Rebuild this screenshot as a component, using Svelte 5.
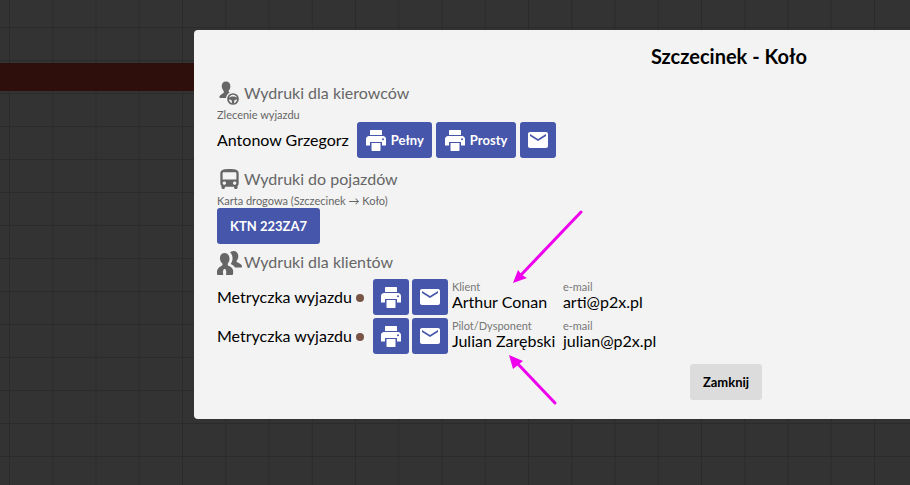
<script>
  const clients = [
    { role: 'Klient', name: 'Arthur Conan', email: 'arti@p2x.pl' },
    { role: 'Pilot/Dysponent', name: 'Julian Zarębski', email: 'julian@p2x.pl' }
  ];
</script>

{#snippet printer()}
  <svg class="ico" viewBox="0 0 24 24">
    <path d="M7 2h10c.6 0 1 .4 1 1v4H6V3c0-.6.4-1 1-1z"/>
    <path fill-rule="evenodd" d="M5 8h14c1.660 0 3 1.340 3 3v6.500h-4V14H6v3.500H2V11c0-1.660 1.340-3 3-3zm14 2.200a1 1 0 1 0 0 2 1 1 0 0 0 0-2z"/>
    <path d="M7.500 15h9v7c0 .6-.4 1-1 1h-7c-.6 0-1-.4-1-1z"/>
  </svg>
{/snippet}
{#snippet mail()}
  <svg class="ico" viewBox="0 0 24 24"><path d="M20 4H4c-1.100 0-2 .9-2 2v12c0 1.100.9 2 2 2h16c1.100 0 2-.9 2-2V6c0-1.100-.9-2-2-2zm0 4l-8 5-8-5V6l8 5 8-5v2z"/></svg>
{/snippet}

<div class="page">
  <div class="band"></div>
  <div class="modal">
    <h2>Szczecinek - Koło</h2>

    <div class="head">
      <svg class="head-ico" viewBox="0 0 25 25">
        <path d="M9 1.500c2.600 0 4.400 2 4.400 4.800 0 1.800-.7 3.300-1.700 4.200-.3 1 .2 1.500 1 2-2 1-3.400 3-3.700 5.500H3.500c-1 0-1.500-.8-1-1.700.8-1.400 2-2 3.300-2.800 1-.6 1.300-1.200 1-2C5.700 9.500 4.700 8 4.700 6.300 4.700 3.500 6.400 1.500 9 1.500z"/>
        <circle class="ring" cx="16" cy="19" r="5"/>
        <path d="M11 18.200c1.500-1.200 3-1.800 5-1.800s3.500.6 5 1.800v1l-3.500.8-.7 3.800h-1.600l-.7-3.800-3.500-.8z"/>
      </svg>
      <span>Wydruki dla kierowców</span>
    </div>
    <div class="small">Zlecenie wyjazdu</div>
    <div class="row driver">
      <span class="name">Antonow Grzegorz</span>
      <button class="btn wide full">{@render printer()}Pełny</button>
      <button class="btn wide plain">{@render printer()}Prosty</button>
      <button class="btn square">{@render mail()}</button>
    </div>

    <div class="head bus">
      <svg class="head-ico" viewBox="0 0 24 24"><path transform="translate(-1.200 0) scale(1.100 1)" d="M4 16c0 .88.39 1.670 1 2.220V20c0 .55.45 1 1 1h1c.55 0 1-.45 1-1v-1h8v1c0 .55.45 1 1 1h1c.55 0 1-.45 1-1v-1.780c.61-.55 1-1.340 1-2.220V6c0-3.500-3.580-4-8-4s-8 .5-8 4v10zm3.500 1c-.83 0-1.500-.67-1.500-1.500S6.670 14 7.500 14s1.500.67 1.500 1.500S8.330 17 7.500 17zm9 0c-.83 0-1.500-.67-1.500-1.500s.67-1.500 1.500-1.500 1.500.67 1.500 1.500-.67 1.500-1.500 1.500zm1.500-5H6V6c0-.6.4-1 1-1h10c.6 0 1 .4 1 1v6z"/></svg>
      <span>Wydruki do pojazdów</span>
    </div>
    <div class="small">Karta drogowa (Szczecinek → Koło)</div>
    <button class="btn plate">KTN 223ZA7</button>

    <div class="head clients">
      <svg class="head-ico" viewBox="0 0 25 25">
        <path d="M16.500 0c3 0 4.800 2.200 4.800 5.200 0 1.800-.7 3.500-1.700 4.500-.3 1 .1 1.400 1 1.900 1.500.8 3.500 1.500 4.200 3 .4.8.2 1.900-.8 1.900h-6c-.7-1.500-2-2.300-3.500-3.100-.6-.4-.7-.7-.4-1.200 1-1.500 1.500-3.200 1.400-5.200-.1-2.400-.9-4.400-2.400-5.800C13.700.9 14.900 0 16.500 0z"/>
        <path d="M7.500 2c3 0 5 2.500 5 5.800 0 2-.8 3.800-1.800 4.900-.3 1 .2 1.700 1.300 2.300 1.800 1 3.500 1.900 4 4 .3 1.300.3 3-.3 5H9l.3-3.500-.9-2.500H6.800l-.9 2.500.3 3.500H.3c-.5-2-.5-3.700 0-5 .7-2.100 2.400-3 4-4 1-.6 1.500-1.300 1.200-2.300C4.200 11.600 3 10 3 7.800 2.800 4.500 4.500 2 7.500 2z"/>
      </svg>
      <span>Wydruki dla klientów</span>
    </div>
    <div class="clients-list">
      {#each clients as c}
        <div class="row client">
          <span class="name metric">Metryczka wyjazdu</span>
          <span class="dot"></span>
          <button class="btn square">{@render printer()}</button>
          <button class="btn square">{@render mail()}</button>
          <div class="field who"><small>{c.role}</small><span>{c.name}</span></div>
          <div class="field"><small>e-mail</small><span>{c.email}</span></div>
        </div>
      {/each}
    </div>

    <div class="foot"><button class="close">Zamknij</button></div>
  </div>

  <svg class="arrows" width="910" height="485" viewBox="0 0 910 485">
    <g stroke="#ee00ee" stroke-width="3" stroke-linecap="round" fill="none">
      <path d="M581 212 521 275"/>
      <path d="M555 403 517 363"/>
    </g>
    <path d="M513 283 518 270 522 275 527 278z" fill="#ee00ee"/>
    <path d="M509 355 523 361 518 365 513 369z" fill="#ee00ee"/>
  </svg>
</div>

<style>
  :global(body) {
    margin: 0;
    overflow: hidden;
  }
  .page {
    position: relative;
    width: 910px;
    height: 485px;
    overflow: hidden;
    padding-top: 30px;
    box-sizing: border-box;
    background-color: #333333;
    background-image:
      linear-gradient(90deg, #2b2b2b 1px, transparent 1px),
      linear-gradient(#2b2b2b 1px, transparent 1px);
    background-size: 43.25px 33px;
    background-position: 9px 27px;
    font-family: Lato, "Liberation Sans", sans-serif;
  }
  .band {
    position: absolute;
    left: 0;
    right: 0;
    top: 63px;
    height: 28px;
    background: #2f0f0b;
  }
  .modal {
    position: relative;
    margin-left: 194px;
    width: 1068px;
    height: 389px;
    box-sizing: border-box;
    padding: 14px 23px 0;
    background: #f3f3f3;
    border-radius: 4px;
    color: #000;
  }
  h2 {
    margin: 0 0 10px;
    padding-left: 2px;
    font-size: 20px;
    line-height: 24px;
    font-weight: 700;
    text-align: center;
  }
  .head {
    display: flex;
    align-items: center;
    gap: 2px;
    height: 28px;
    color: #666;
    font-size: 16px;
  }
  .head.bus {
    margin-top: 6px;
  }
  .head.clients {
    margin-top: 3px;
  }
  .head-ico {
    width: 25px;
    height: 25px;
    fill: #666;
    flex: none;
  }
  .head.bus .head-ico {
    margin-top: 3px;
  }
  .head.clients .head-ico {
    margin-top: 4px;
  }
  .ring {
    fill: none;
    stroke: #666;
    stroke-width: 1.700;
  }
  .small {
    margin-top: 2px;
    font-size: 11px;
    line-height: 13px;
    color: #666;
  }
  .row {
    display: flex;
    align-items: center;
  }
  .driver {
    gap: 4px;
    margin-top: 1px;
  }
  .name {
    padding-bottom: 2px;
    font-size: 16px;
    margin-right: 4px;
  }
  .btn {
    display: inline-flex;
    align-items: center;
    justify-content: center;
    height: 36px;
    border: none;
    padding: 0;
    border-radius: 3px;
    background: #4656ab;
    color: #fff;
    font: 700 13px Lato, "Liberation Sans", sans-serif;
  }
  .wide {
    justify-content: flex-start;
    gap: 3px;
    padding-left: 7px;
  }
  .full {
    width: 75px;
  }
  .plain {
    width: 80px;
  }
  .square {
    width: 36px;
    flex: none;
  }
  .ico {
    width: 24px;
    height: 24px;
    fill: #fff;
  }
  .plate {
    display: flex;
    width: 103px;
    margin-top: 1px;
  }
  .clients-list {
    display: flex;
    flex-direction: column;
    gap: 3px;
    margin-top: 4px;
  }
  .client {
    gap: 3px;
    height: 36px;
  }
  .metric {
    margin-right: 1px;
  }
  .dot {
    width: 8px;
    height: 8px;
    border-radius: 50%;
    background: #795548;
    margin-top: 2px;
    margin-right: 6px;
  }
  .field {
    display: flex;
    flex-direction: column;
    align-self: flex-start;
    margin-top: 1px;
    font-size: 16px;
    line-height: 18px;
  }
  .field small {
    margin-bottom: -1px;
    font-size: 11px;
    line-height: 14px;
    color: #777;
  }
  .who {
    width: 108px;
    margin-left: 1px;
  }
  .foot {
    display: flex;
    width: 545px;
    justify-content: flex-end;
    margin-top: 10px;
  }
  .close {
    width: 72px;
    height: 36px;
    border: none;
    border-radius: 3px;
    background: #dcdcdc;
    color: #000;
    font: 700 13px Lato, "Liberation Sans", sans-serif;
  }
  .arrows {
    position: absolute;
    left: 0;
    top: 0;
    pointer-events: none;
  }
</style>
